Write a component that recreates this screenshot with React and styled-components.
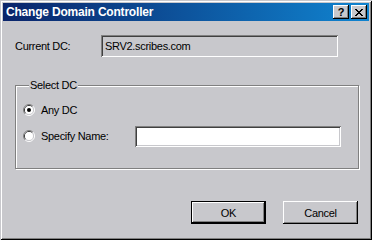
import styled, { createGlobalStyle } from "styled-components";

const Global = createGlobalStyle`
  html, body {
    margin: 0;
    padding: 0;
    background: #c8c8cc;
  }
  * {
    box-sizing: border-box;
  }
`;

const face = "#c8c8cc";

const Window = styled.div`
  width: 372px;
  height: 240px;
  background: ${face};
  padding: 3px 3px 3px 3px;
  box-shadow: inset 1px 1px ${face}, inset -1px -1px #000, inset 2px 2px #fff,
    inset -2px -2px #808080;
  display: flex;
  flex-direction: column;
  font-family: "Liberation Sans", Arial, sans-serif;
  font-size: 11px;
  letter-spacing: -0.3px;
  color: #000;
`;

const TitleBar = styled.div`
  height: 18px;
  background: linear-gradient(90deg, #0a246a, #1084d0);
  display: flex;
  align-items: center;
  justify-content: space-between;
  padding: 0 2px 0 3px;
`;

const Title = styled.span`
  color: #fff;
  font-weight: bold;
  font-size: 12px;
  letter-spacing: -0.2px;
`;

const Controls = styled.div`
  display: flex;
  gap: 2px;
`;

const CtrlButton = styled.div`
  width: 16px;
  height: 14px;
  background: ${face};
  box-shadow: inset -1px -1px #000, inset 1px 1px #fff, inset -2px -2px #808080;
  display: flex;
  align-items: center;
  justify-content: center;
  font-weight: bold;
  font-size: 11px;
  letter-spacing: 0;
  line-height: 1;
`;

const Body = styled.div`
  flex: 1;
  display: flex;
  flex-direction: column;
  padding: 14px 11px 0 12px;
`;

const FieldRow = styled.div`
  display: flex;
  align-items: center;
  height: 22px;
`;

const Label = styled.span`
  width: 86px;
`;

const Field = styled.div`
  width: 237px;
  height: 22px;
  padding: 0 0 0 4px;
  display: flex;
  align-items: center;
  background: ${(p) => (p.$disabled ? face : "#fff")};
  box-shadow: inset 1px 1px #808080, inset -1px -1px #fff, inset 2px 2px #404040,
    inset -2px -2px ${face};
`;

const Group = styled.fieldset`
  margin: 22px 0 0 0;
  padding: 11px 0 0 7px;
  height: 90px;
  border: 1px solid #808080;
  box-shadow: inset 1px 1px #fff, 1px 1px #fff;
  width: 344px;
  display: flex;
  flex-direction: column;
`;

const Legend = styled.legend`
  padding: 0 1px;
  margin-left: 6px;
  background: ${face};
`;

const OptionRow = styled.div`
  display: flex;
  align-items: center;
  height: ${(p) => p.$h}px;
`;

const RadioBox = styled.svg`
  width: 12px;
  height: 12px;
  flex: none;
  margin-right: 6px;
`;

const NameInput = styled(Field)`
  width: 206px;
  height: 21px;
  margin-left: auto;
  margin-right: 17px;
`;

const Buttons = styled.div`
  display: flex;
  justify-content: flex-end;
  gap: 17px;
  margin-top: 32px;
`;

const Button = styled.div`
  width: 75px;
  height: 23px;
  display: flex;
  align-items: center;
  justify-content: center;
  background: ${face};
  border: ${(p) => (p.$default ? "1px solid #000" : "none")};
  box-shadow: inset -1px -1px #000, inset 1px 1px #fff, inset -2px -2px #808080;
`;

const Radio = ({ checked }) => (
  <RadioBox viewBox="0 0 12 12">
    <path d="M2.11 9.89 A5.5 5.5 0 0 1 9.89 2.11" stroke="#808080" fill="none" />
    <path d="M9.89 2.11 A5.5 5.5 0 0 1 2.11 9.89" stroke="#fff" fill="none" />
    <path d="M2.82 9.18 A4.5 4.5 0 0 1 9.18 2.82" stroke="#404040" fill="none" />
    <path d="M9.18 2.82 A4.5 4.5 0 0 1 2.82 9.18" stroke={face} fill="none" />
    <circle cx="6" cy="6" r="4" fill="#fff" />
    {checked && <circle cx="6" cy="6" r="2" fill="#000" />}
  </RadioBox>
);

export default function App() {
  return (
    <>
      <Global />
      <Window>
        <TitleBar>
          <Title>Change Domain Controller</Title>
          <Controls>
            <CtrlButton>?</CtrlButton>
            <CtrlButton>
              <svg width="8" height="7" viewBox="0 0 8 7">
                <path d="M0 0 L7 7 M1 0 L8 7 M7 0 L0 7 M8 0 L1 7" stroke="#000" strokeWidth="1" />
              </svg>
            </CtrlButton>
          </Controls>
        </TitleBar>
        <Body>
          <FieldRow>
            <Label>Current DC:</Label>
            <Field $disabled>SRV2.scribes.com</Field>
          </FieldRow>
          <Group>
            <Legend>Select DC</Legend>
            <OptionRow $h={16}>
              <Radio checked />
              Any DC
            </OptionRow>
            <OptionRow $h={36}>
              <Radio />
              Specify Name:
              <NameInput />
            </OptionRow>
          </Group>
          <Buttons>
            <Button $default>OK</Button>
            <Button>Cancel</Button>
          </Buttons>
        </Body>
      </Window>
    </>
  );
}
